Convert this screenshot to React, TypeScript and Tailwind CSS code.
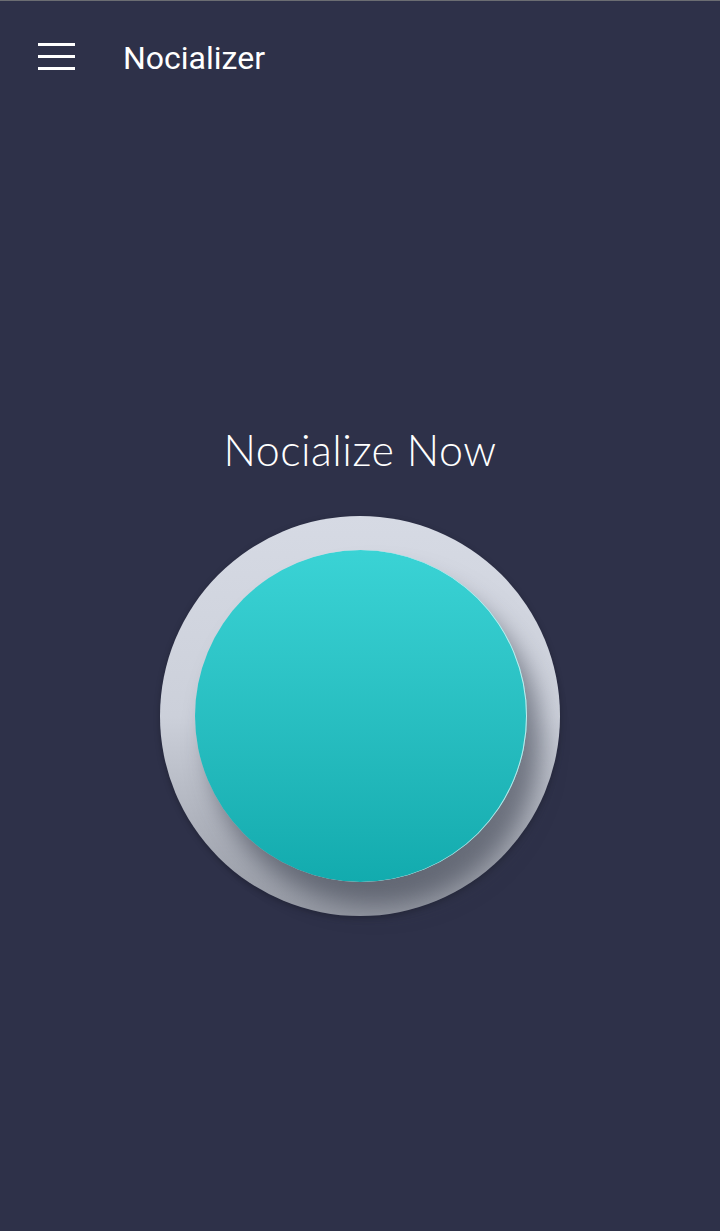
export default function App() {
  return (
    <div className="min-h-[1231px] w-full bg-[#2e3149] border-t border-[#6b6d72] flex flex-col font-['Roboto',sans-serif]">
      {/* Barra superior */}
      <header className="h-[112px] flex items-center pl-[38px] -mt-[1px]">
        <button type="button" className="flex flex-col gap-[9px] w-[37px]">
          <span className="block h-[3px] w-full bg-white" />
          <span className="block h-[3px] w-full bg-white" />
          <span className="block h-[3px] w-full bg-white" />
        </button>
        <h1 className="ml-[48px] mt-[3px] text-[32px] text-white leading-none">Nocializer</h1>
      </header>

      <main className="flex flex-col items-center pt-[316px]">
        <p className="text-white text-[43px] font-light leading-none tracking-[0.5px] font-['Lato',sans-serif]">
          Nocialize Now
        </p>

        {/* Boton grande */}
        <div className="mt-[45px] w-[400px] h-[400px] rounded-full bg-gradient-to-b from-[#d6dae4] via-[#ccd0da] to-[#969aa4] flex items-center justify-center shadow-[0_2px_6px_rgba(0,0,0,0.25)]">
          <button
            type="button"
            className="w-[332px] h-[332px] rounded-full bg-gradient-to-b from-[#3ad3d5] to-[#12abae] shadow-[14px_24px_24px_rgba(50,54,70,0.55),inset_-1px_0_0_rgba(255,255,255,0.7)] ml-[2px]"
          />
        </div>
      </main>
    </div>
  );
}
